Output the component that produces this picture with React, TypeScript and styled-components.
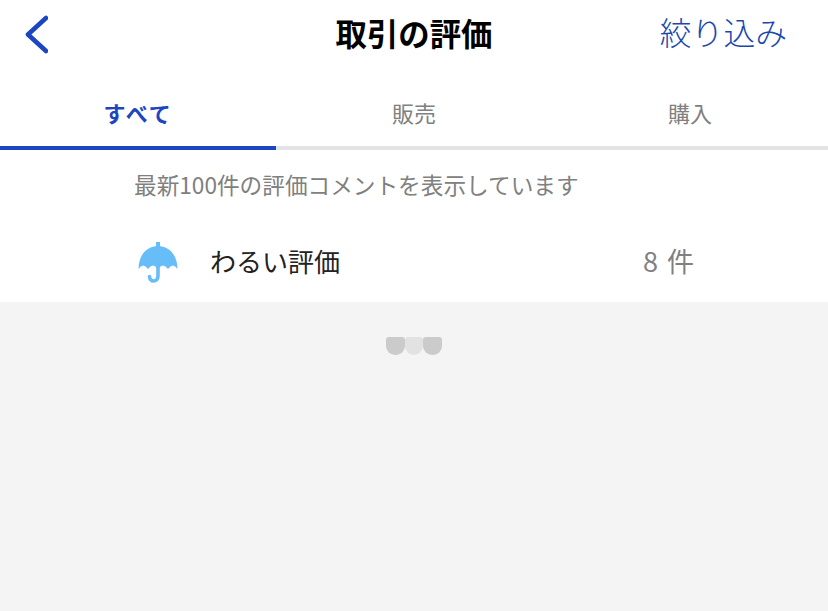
import { createGlobalStyle, styled } from "styled-components";

const GlobalStyle = createGlobalStyle`
  html, body {
    margin: 0;
    padding: 0;
    background: #f4f4f4;
  }
  body {
    font-family: "Noto Sans CJK JP", "Liberation Sans", sans-serif;
  }
`;

function BackIcon() {
  return (
    <svg width="24" height="40" viewBox="0 0 24 40">
      <path
        d="M22 3 L4 19.5 L22 36"
        fill="none"
        stroke="#1c46bf"
        strokeWidth="4.6"
        strokeLinecap="round"
        strokeLinejoin="round"
      />
    </svg>
  );
}

function UmbrellaIcon() {
  return (
    <svg width="42" height="42" viewBox="0 0 42 42">
      <rect x="19" y="1" width="4" height="6" fill="#66bdf8" />
      <path
        d="M1.5 28 C1.5 14 10 5 21 5 C32 5 40.5 14 40.5 28 Q36 21 31 28 Q26 21 21 28 Q16 21 11 28 Q6 21 1.5 28 Z"
        fill="#66bdf8"
      />
      <path
        d="M21 25 V35 C21 41.5 12.5 41.5 12.5 35.5"
        fill="none"
        stroke="#66bdf8"
        strokeWidth="3.6"
        strokeLinecap="round"
      />
    </svg>
  );
}

function App() {
  return (
    <>
      <GlobalStyle />
      <Page>
        <Header>
          <BackButton>
            <BackIcon />
          </BackButton>
          <Title>取引の評価</Title>
          <FilterButton>絞り込み</FilterButton>
        </Header>
        <Tabs>
          <Tab $active>すべて</Tab>
          <Tab>販売</Tab>
          <Tab>購入</Tab>
        </Tabs>
        <Notice>最新100件の評価コメントを表示しています</Notice>
        <ReviewRow>
          <UmbrellaSlot>
            <UmbrellaIcon />
          </UmbrellaSlot>
          <ReviewLabel>わるい評価</ReviewLabel>
          <ReviewCount>8 件</ReviewCount>
        </ReviewRow>
        <Loader>
          <Dot $tone="#cbcbcb" />
          <Dot $tone="#e2e2e2" />
          <Dot $tone="#cbcbcb" />
        </Loader>
      </Page>
    </>
  );
}

const Page = styled.div`
  width: 828px;
  height: 611px;
  overflow: hidden;
  background: #f4f4f4;
`;

const Header = styled.header`
  display: grid;
  grid-template-columns: 1fr auto 1fr;
  align-items: center;
  height: 70px;
  padding: 0 41px;
  background: #fff;
`;

const BackButton = styled.div`
  display: flex;
  align-items: center;
  margin-left: -17px;
`;

const Title = styled.h1`
  margin: 0;
  padding-bottom: 6px;
  font-size: 31.4px;
  font-weight: 700;
  color: #000;
`;

const FilterButton = styled.div`
  justify-self: end;
  padding-bottom: 8px;
  font-size: 31.8px;
  font-weight: 300;
  color: #1a47ad;
`;

const Tabs = styled.nav`
  display: grid;
  grid-template-columns: repeat(3, 1fr);
  background: #fff;
`;

const Tab = styled.div<{ $active?: boolean }>`
  display: flex;
  align-items: center;
  justify-content: center;
  height: 80px;
  padding-top: 8px;
  box-sizing: border-box;
  border-bottom: 4px solid ${(p) => (p.$active ? "#1c46bf" : "#e4e4e4")};
  font-size: 22px;
  font-weight: ${(p) => (p.$active ? 700 : 400)};
  letter-spacing: ${(p) => (p.$active ? "1.8px" : "0")};
  color: ${(p) => (p.$active ? "#1c46bf" : "#808080")};
`;

const Notice = styled.p`
  margin: 0;
  padding: 19px 0 0 134px;
  height: 54px;
  box-sizing: border-box;
  background: #fff;
  font-size: 22.65px;
  line-height: 32px;
  color: #808080;
`;

const ReviewRow = styled.div`
  display: flex;
  align-items: center;
  height: 98px;
  padding: 14px 134px 0 137px;
  box-sizing: border-box;
  background: #fff;
`;

const UmbrellaSlot = styled.div`
  display: flex;
  margin-top: 3px;
`;

const ReviewLabel = styled.span`
  margin-left: 31px;
  font-size: 26px;
  color: #222;
`;

const ReviewCount = styled.span`
  margin-left: auto;
  font-size: 27px;
  word-spacing: 3px;
  color: #808080;
`;

const Loader = styled.div`
  display: flex;
  justify-content: center;
  padding-top: 35px;
`;

const Dot = styled.span<{ $tone: string }>`
  width: 18.67px;
  height: 18px;
  border-radius: 3px 3px 9px 9px;
  background: ${(p) => p.$tone};
`;

export default App;
